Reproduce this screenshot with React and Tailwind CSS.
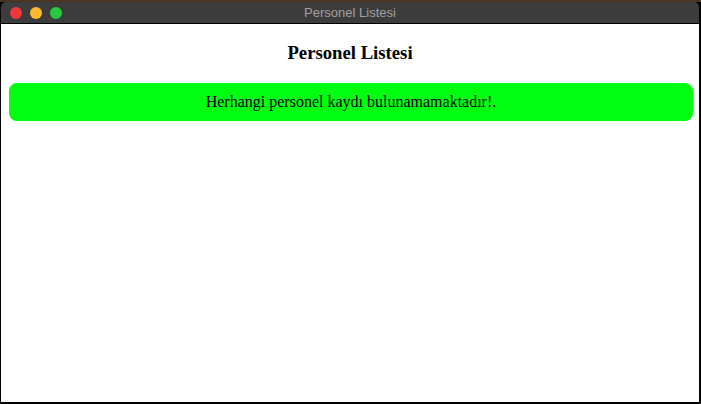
import React from 'react';

const TrafficLights = () => (
  <div className="absolute left-[9px] top-[5px] flex gap-[8px]">
    <span className="w-[12px] h-[12px] rounded-full bg-[#f0383d]" />
    <span className="w-[12px] h-[12px] rounded-full bg-[#fdbb2d]" />
    <span className="w-[12px] h-[12px] rounded-full bg-[#27c941]" />
  </div>
);

const App = () => {
  const personeller = [];

  return (
    <div className="w-[701px] h-[404px] bg-black flex flex-col overflow-hidden">
      <div className="h-[2px] bg-[#4a3520]" />
      <div className="flex-1 flex flex-col pl-px pr-[2px] pb-[2px]">
        <div className="relative h-[22px] bg-[#3c3c3c] rounded-t-[5px] border-b border-black flex items-center justify-center">
          <TrafficLights />
          <span className="text-[13px] text-[#a0a0a0] font-['Helvetica','Liberation_Sans',sans-serif]">
            Personel Listesi
          </span>
        </div>
        <div className="flex-1 bg-white pt-[18px] font-['Liberation_Serif','Times_New_Roman',serif] text-black">
          <h3 className="text-center font-bold text-[18.72px] leading-[22px]">Personel Listesi</h3>
          {personeller.length === 0 && (
            <div className="mt-[19px] ml-[8px] mr-[6px] h-[38px] rounded-[8px] bg-[#00ff11] flex items-center justify-center text-[16px]">
              Herhangi personel kaydı bulunamamaktadır!.
            </div>
          )}
        </div>
      </div>
    </div>
  );
};

export default App;
